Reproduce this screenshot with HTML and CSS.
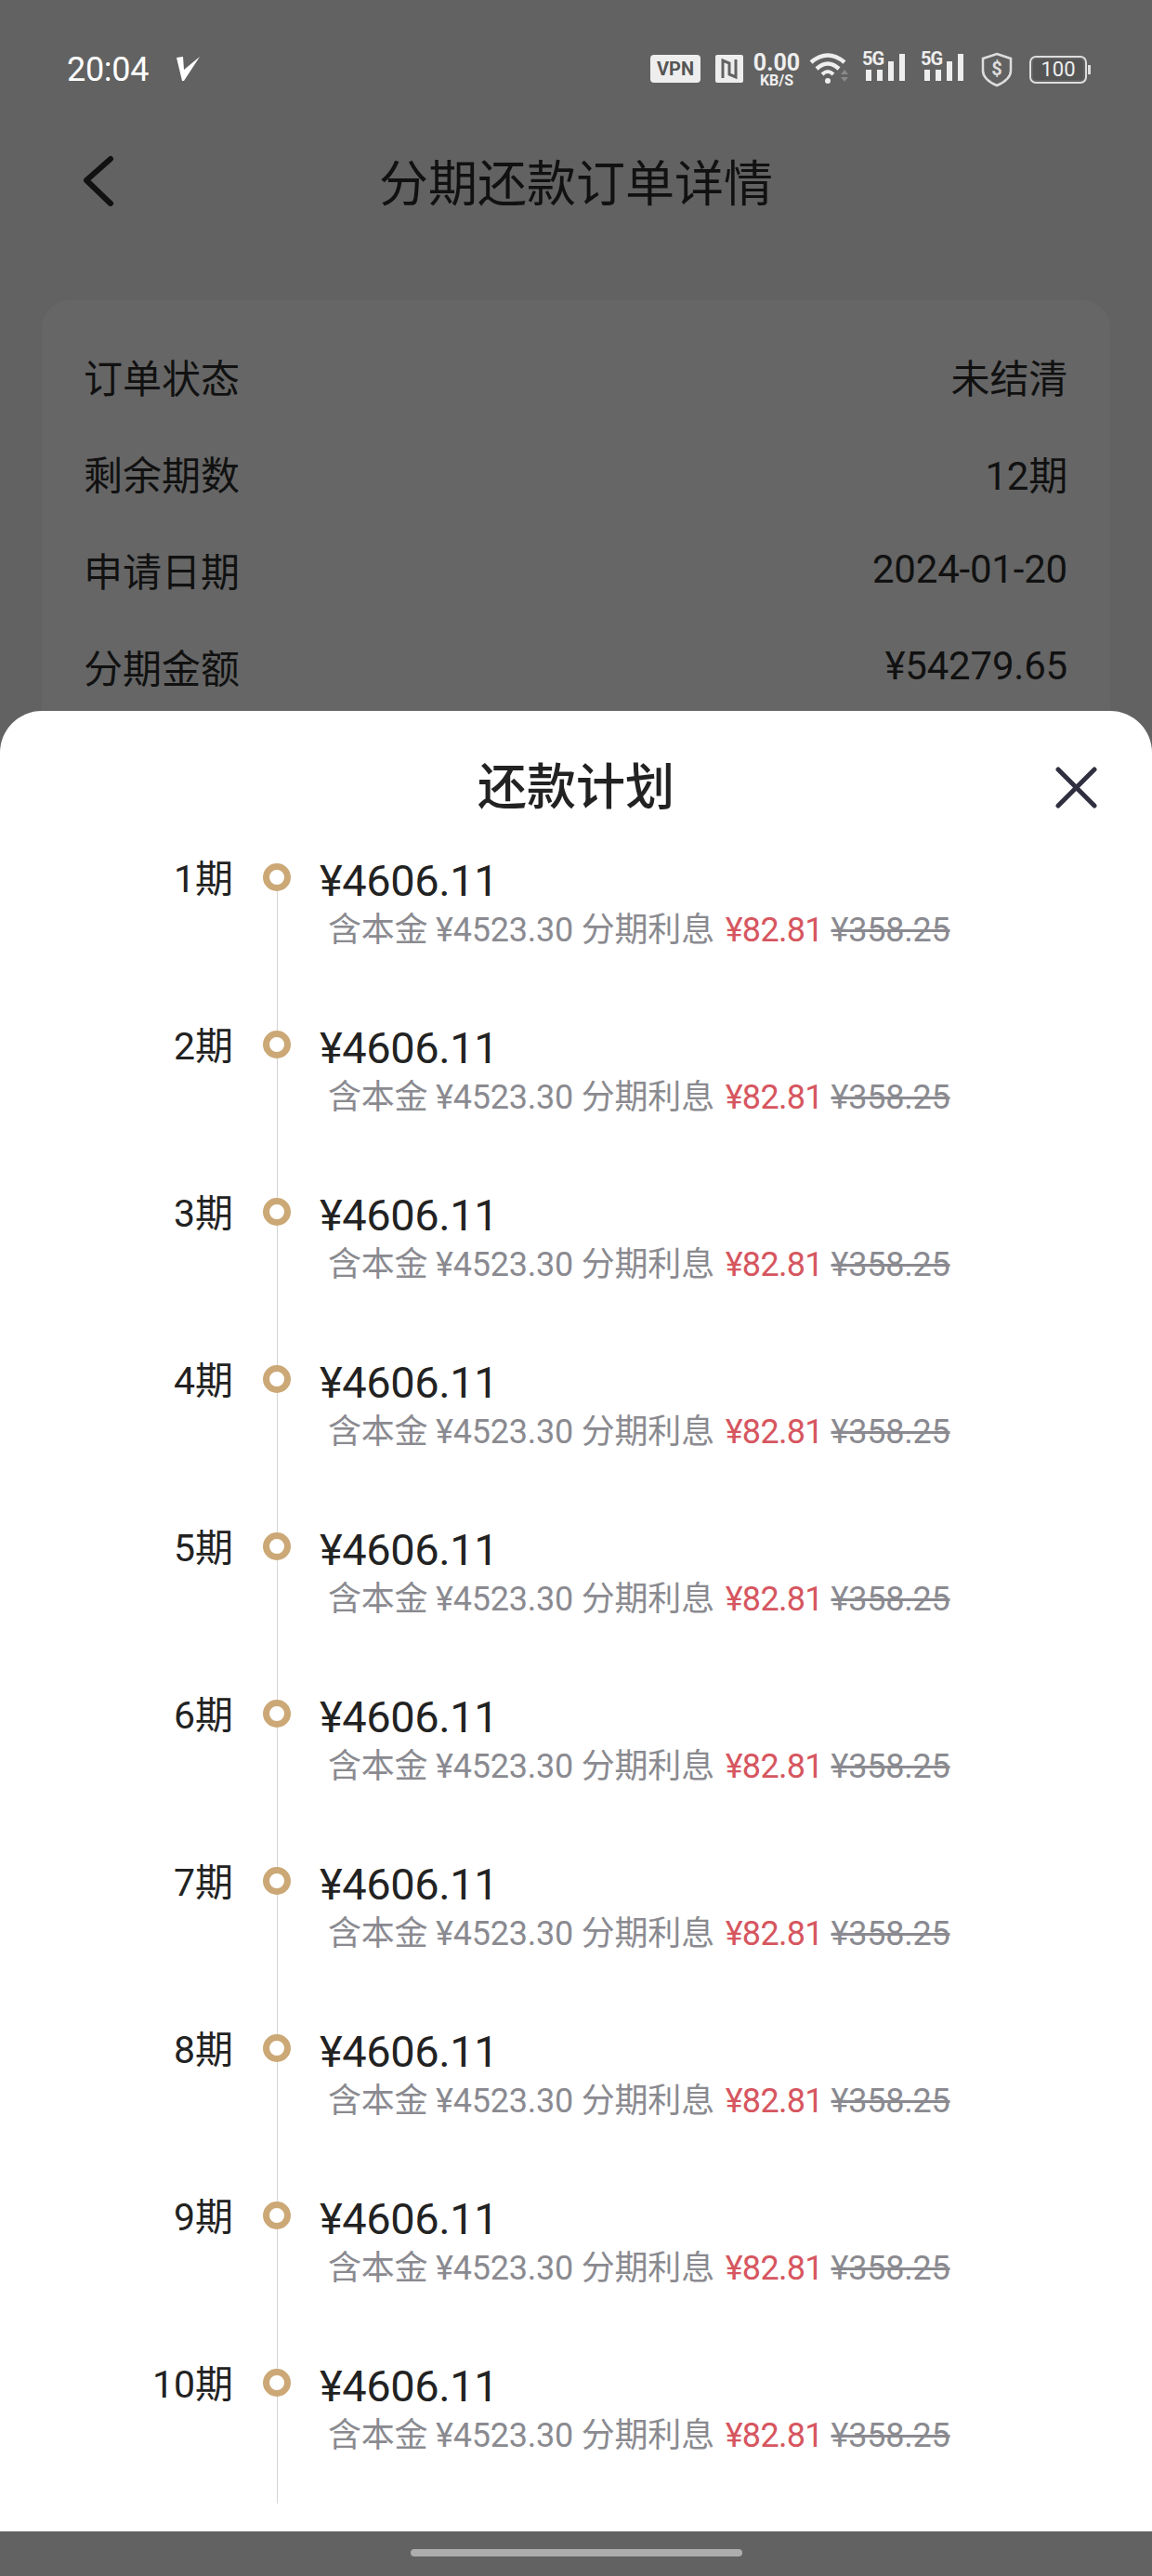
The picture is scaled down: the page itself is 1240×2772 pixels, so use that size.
FILE: index.html
```html
<!doctype html>
<html>
	<head>
		<meta charset="utf-8" />
		<title>分期还款订单详情</title>
		<meta name="viewport" content="width=device-width,initial-scale=1.0" />
		<link rel="stylesheet" href="styles.css">
	</head>
	<body>
		<div id="page">
			<div class="status">
				<span class="time">20:04</span>
				<svg class="loc" width="28" height="28" viewBox="0 0 28 28"><path d="M1 2 L8 1 L9 15 L26 1 L9 27 L7 27 Z" fill="#fff"/></svg>
				<div class="status-icons">
					<span class="vpn">VPN</span>
					<svg class="nfc" width="30" height="30" viewBox="0 0 30 30"><rect width="30" height="30" rx="2" fill="#eee"/><path d="M8 25 V6 L15 9 V21 L22 24 V5" fill="none" stroke="#626262" stroke-width="3"/></svg>
					<div class="speed"><b>0.00</b><i>KB/S</i></div>
					<svg class="wifi" width="44" height="34" viewBox="0 0 44 34">
						<path d="M2 11 Q20 -4 38 11" fill="none" stroke="#eee" stroke-width="4.5"/>
						<path d="M8 18 Q20 7 32 18" fill="none" stroke="#eee" stroke-width="4.5"/>
						<path d="M14 24 Q20 18 26 24" fill="none" stroke="#eee" stroke-width="4"/>
						<circle cx="20" cy="31" r="3" fill="#eee"/>
						<path d="M34 24 L38 19 L42 24 Z M34 27 L42 27 L38 32 Z" fill="#8a8a8a"/>
					</svg>
					<div class="signal"><em>5G</em><u class="b1"></u><u class="b2"></u><u class="b3"></u><u class="b4"></u></div>
					<div class="signal"><em>5G</em><u class="b1"></u><u class="b2"></u><u class="b3"></u><u class="b4"></u></div>
					<svg class="shield" width="34" height="38" viewBox="0 0 34 38">
						<path d="M17 2 L32 7 V20 C32 28 24 33 17 36 C10 33 2 28 2 20 V7 Z" fill="none" stroke="#ddd" stroke-width="2.5"/>
						<text x="17" y="25" text-anchor="middle" class="shield-text">$</text>
					</svg>
					<div class="battery"><span>100</span></div>
				</div>
			</div>
			<div class="nav">
				<svg class="back" width="36" height="56" viewBox="0 0 36 56"><path d="M32 5 L6 28 L32 53" fill="none" stroke="#111" stroke-width="6" stroke-linecap="round" stroke-linejoin="round"/></svg>
				<h1>分期还款订单详情</h1>
			</div>
			<div class="card">
				<div class="row"><span>订单状态</span><span class="val">未结清</span></div>
				<div class="row"><span>剩余期数</span><span class="val">12期</span></div>
				<div class="row"><span>申请日期</span><span class="val">2024-01-20</span></div>
				<div class="row"><span>分期金额</span><span class="val">¥54279.65</span></div>
			</div>
		</div>
		<div id="sheet">
			<div class="sheet-head">
				<h2>还款计划</h2>
				<svg class="close" width="45" height="45" viewBox="0 0 45 45"><path d="M3 3 L42 42 M42 3 L3 42" fill="none" stroke="#2f2f3f" stroke-width="5" stroke-linecap="round"/></svg>
			</div>
			<ul class="plan">
				<li><span class="period">1期</span><div class="rail"><i class="ring"></i><i class="line"></i></div><div class="info"><p class="amount">¥4606.11</p><p class="detail">含本金 ¥4523.30 分期利息 <span class="red">¥82.81</span> <s>¥358.25</s></p></div></li>
				<li><span class="period">2期</span><div class="rail"><i class="ring"></i><i class="line"></i></div><div class="info"><p class="amount">¥4606.11</p><p class="detail">含本金 ¥4523.30 分期利息 <span class="red">¥82.81</span> <s>¥358.25</s></p></div></li>
				<li><span class="period">3期</span><div class="rail"><i class="ring"></i><i class="line"></i></div><div class="info"><p class="amount">¥4606.11</p><p class="detail">含本金 ¥4523.30 分期利息 <span class="red">¥82.81</span> <s>¥358.25</s></p></div></li>
				<li><span class="period">4期</span><div class="rail"><i class="ring"></i><i class="line"></i></div><div class="info"><p class="amount">¥4606.11</p><p class="detail">含本金 ¥4523.30 分期利息 <span class="red">¥82.81</span> <s>¥358.25</s></p></div></li>
				<li><span class="period">5期</span><div class="rail"><i class="ring"></i><i class="line"></i></div><div class="info"><p class="amount">¥4606.11</p><p class="detail">含本金 ¥4523.30 分期利息 <span class="red">¥82.81</span> <s>¥358.25</s></p></div></li>
				<li><span class="period">6期</span><div class="rail"><i class="ring"></i><i class="line"></i></div><div class="info"><p class="amount">¥4606.11</p><p class="detail">含本金 ¥4523.30 分期利息 <span class="red">¥82.81</span> <s>¥358.25</s></p></div></li>
				<li><span class="period">7期</span><div class="rail"><i class="ring"></i><i class="line"></i></div><div class="info"><p class="amount">¥4606.11</p><p class="detail">含本金 ¥4523.30 分期利息 <span class="red">¥82.81</span> <s>¥358.25</s></p></div></li>
				<li><span class="period">8期</span><div class="rail"><i class="ring"></i><i class="line"></i></div><div class="info"><p class="amount">¥4606.11</p><p class="detail">含本金 ¥4523.30 分期利息 <span class="red">¥82.81</span> <s>¥358.25</s></p></div></li>
				<li><span class="period">9期</span><div class="rail"><i class="ring"></i><i class="line"></i></div><div class="info"><p class="amount">¥4606.11</p><p class="detail">含本金 ¥4523.30 分期利息 <span class="red">¥82.81</span> <s>¥358.25</s></p></div></li>
				<li><span class="period">10期</span><div class="rail"><i class="ring"></i><i class="line"></i></div><div class="info"><p class="amount">¥4606.11</p><p class="detail">含本金 ¥4523.30 分期利息 <span class="red">¥82.81</span> <s>¥358.25</s></p></div></li>
			</ul>
		</div>
		<div class="home"><i></i></div>
	</body>
</html>
```
FILE: styles.css
```css
*{
	margin:0px;
	padding:0px;
	box-sizing:border-box;
}
html,body{
	width:1240px;
	height:2772px;
	overflow:hidden;
	background-color:#626262;
	font-family:Roboto,"Noto Sans CJK SC",sans-serif;
	color:#111;
}
ul{
	list-style:none;
}
i,em,u{
	font-style:normal;
	text-decoration:none;
}
#page{
	height:765px;
	overflow:hidden;
}
.status{
	height:118px;
	padding:56px 0 0 72px;
	display:flex;
	align-items:flex-start;
}
.time{
	font-size:36px;
	line-height:38px;
	letter-spacing:-.3px;
	color:#fff;
}
.loc{
	margin:4px 0 0 29px;
}
.status-icons{
	display:flex;
	align-items:flex-start;
	margin-left:auto;
	padding-right:70px;
}
.vpn{
	width:54px;
	height:30px;
	margin-top:3px;
	border-radius:4px;
	background-color:#eee;
	color:#555;
	font-size:20px;
	font-weight:700;
	line-height:30px;
	text-align:center;
}
.nfc{
	margin:3px 0 0 16px;
}
.speed{
	width:52px;
	margin-left:10px;
	color:#eee;
	text-align:center;
}
.speed b{
	display:block;
	font-size:25px;
	line-height:24px;
	font-weight:700;
}
.speed i{
	display:block;
	font-size:16px;
	line-height:14px;
	font-weight:700;
}
.wifi{
	margin-left:9px;
}
.signal{
	position:relative;
	width:46px;
	height:31px;
	margin-left:13px;
	display:flex;
	align-items:flex-end;
	gap:6px;
	padding-left:4px;
}
.signal + .signal{
	margin-left:17px;
}
.signal em{
	position:absolute;
	left:0;
	top:-3px;
	font-size:20px;
	line-height:20px;
	font-weight:700;
	letter-spacing:-1px;
	color:#eee;
}
.signal u{
	width:6px;
	background-color:#eee;
}
.signal .b1,.signal .b2{
	height:12px;
}
.signal .b3{
	height:21px;
}
.signal .b4{
	height:29px;
}
.shield{
	margin-left:19px;
}
.shield-text{
	font-size:20px;
	font-weight:700;
	fill:#ddd;
}
.battery{
	position:relative;
	width:62px;
	height:30px;
	margin:4px 0 0 18px;
	border:2px solid #ddd;
	border-radius:7px;
	padding:2px;
}
.battery:after{
	content:"";
	position:absolute;
	right:-6px;
	top:8px;
	width:3px;
	height:10px;
	background-color:#ddd;
}
.battery span{
	display:block;
	height:22px;
	border-radius:3px;
	background-color:#555;
	color:#eee;
	font-size:22px;
	line-height:22px;
	text-align:center;
}
.nav{
	position:relative;
	height:205px;
	padding-top:45px;
	text-align:center;
}
.back{
	position:absolute;
	left:87px;
	top:48px;
}
.nav h1{
	font-size:53px;
	line-height:72px;
	font-weight:400;
}
.card{
	height:500px;
	margin:0 45px;
	padding:29px 46px 0 45px;
	background-color:#666;
	border-radius:30px;
}
.row{
	height:104px;
	display:flex;
	justify-content:space-between;
	align-items:center;
	font-size:42px;
}
.val{
	letter-spacing:-.2px;
}
#sheet{
	height:1959px;
	background-color:#fff;
	border-radius:45px 45px 0 0;
}
.sheet-head{
	height:164px;
	padding:60px 59px 0;
	display:flex;
	justify-content:center;
	position:relative;
}
.sheet-head h2{
	font-size:53px;
	line-height:46px;
	font-weight:500;
	color:#222;
}
.close{
	position:absolute;
	right:59px;
	top:60px;
}
.plan li{
	height:180px;
	display:flex;
	align-items:stretch;
}
.plan li:last-child{
	height:145px;
}
.period{
	width:251px;
	text-align:right;
	font-size:41px;
	line-height:34px;
	color:#222;
}
.rail{
	width:30px;
	margin:0 31px 0 32px;
	display:flex;
	flex-direction:column;
	align-items:center;
}
.ring{
	width:30px;
	height:30px;
	border:7px solid #cba876;
	border-radius:50%;
	flex:none;
}
.line{
	width:1px;
	flex:1;
	background-color:#d4d4d4;
}
.amount{
	font-size:47px;
	line-height:34px;
	margin-top:2px;
	letter-spacing:-.4px;
	font-weight:450;
	color:#222;
}
.detail{
	margin-top:16px;
	padding-left:9px;
	font-size:36px;
	line-height:40px;
	letter-spacing:-.22px;
	color:#8a8a90;
	white-space:nowrap;
}
.red{
	margin-left:3px;
	letter-spacing:-.7px;
	color:#d6565f;
}
.home{
	height:48px;
	padding-top:19px;
	display:flex;
	justify-content:center;
}
.home i{
	width:357px;
	height:8px;
	border-radius:4px;
	background-color:#adadad;
}
```
